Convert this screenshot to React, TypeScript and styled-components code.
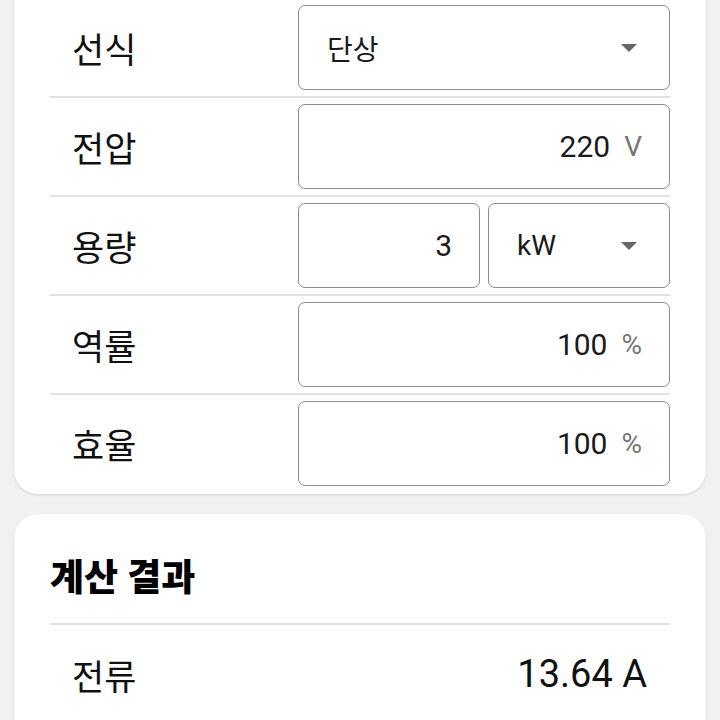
import styled, { createGlobalStyle } from "styled-components";

const GlobalStyle = createGlobalStyle`
  html, body {
    margin: 0;
    padding: 0;
    background-color: #f1f1f1;
    font-family: Roboto, "Noto Sans CJK KR", sans-serif;
    color: #111;
  }
  * {
    box-sizing: border-box;
  }
`;

const Page = styled.div`
  display: flex;
  flex-direction: column;
  gap: 20px;
  padding: 0 14px;
  margin-top: -41px;
`;

const Card = styled.div<{ $top?: number; $bottom?: number }>`
  background-color: #fff;
  border-radius: 24px;
  padding: ${(p) => p.$top ?? 0}px 36px ${(p) => p.$bottom ?? 0}px;
  box-shadow: 0 1px 3px rgba(0, 0, 0, 0.12);
`;

const Row = styled.div<{ $last?: boolean }>`
  display: grid;
  grid-template-columns: 248px 1fr;
  align-items: center;
  padding: 6px 0;
  border-bottom: ${(p) => (p.$last ? "none" : "2px solid #e2e2e2")};
`;

const Label = styled.div<{ $inset?: number }>`
  padding-left: ${(p) => p.$inset ?? 22}px;
  font-size: 35px;
  font-weight: 400;
  color: #111;
`;

const Fields = styled.div`
  display: grid;
  grid-auto-flow: column;
  grid-auto-columns: minmax(0, 1fr);
  gap: 8px;
`;

const Field = styled.div`
  height: 85px;
  border: 1.5px solid #8c8c8c;
  border-radius: 7px;
  display: flex;
  align-items: center;
  justify-content: flex-end;
  padding: 0 27px 0 20px;
`;

const Value = styled.span`
  font-size: 30px;
  color: #1a1a1a;
`;

const Unit = styled.span`
  margin-left: 14px;
  font-size: 28px;
  color: #767676;
`;

const Select = styled.div`
  height: 85px;
  border: 1.5px solid #8c8c8c;
  border-radius: 7px;
  display: flex;
  align-items: center;
  justify-content: space-between;
  padding: 0 32px 0 28px;
`;

const SelectText = styled.span`
  font-size: 28px;
  color: #1a1a1a;
`;

const Arrow = styled.span`
  width: 0;
  height: 0;
  border-left: 8px solid transparent;
  border-right: 8px solid transparent;
  border-top: 8px solid #666;
`;

const Title = styled.h2`
  margin: 0;
  font-size: 37px;
  font-weight: 900;
  line-height: 41px;
  color: #000;
  padding-bottom: 24px;
  border-bottom: 2px solid #e2e2e2;
`;

const ResultRow = styled.div`
  display: flex;
  align-items: center;
  justify-content: space-between;
  height: 98px;
  padding: 0 23px 0 22px;
`;

const ResultValue = styled.span`
  font-size: 38px;
  color: #111;
`;

const NumberField = ({ value, unit }: { value: string; unit?: string }) => (
  <Field>
    <Value>{value}</Value>
    {unit && <Unit>{unit}</Unit>}
  </Field>
);

const Dropdown = ({ text }: { text: string }) => (
  <Select>
    <SelectText>{text}</SelectText>
    <Arrow />
  </Select>
);

const App = () => {
  return (
    <>
      <GlobalStyle />
      <Page>
        <Card $top={40} $bottom={2}>
          <Row>
            <Label>선식</Label>
            <Fields>
              <Dropdown text="단상" />
            </Fields>
          </Row>
          <Row>
            <Label>전압</Label>
            <Fields>
              <NumberField value="220" unit="V" />
            </Fields>
          </Row>
          <Row>
            <Label>용량</Label>
            <Fields>
              <NumberField value="3" />
              <Dropdown text="kW" />
            </Fields>
          </Row>
          <Row>
            <Label>역률</Label>
            <Fields>
              <NumberField value="100" unit="%" />
            </Fields>
          </Row>
          <Row $last>
            <Label>효율</Label>
            <Fields>
              <NumberField value="100" unit="%" />
            </Fields>
          </Row>
        </Card>
        <Card $top={44} $bottom={20}>
          <Title>계산 결과</Title>
          <ResultRow>
            <Label $inset={0}>전류</Label>
            <ResultValue>13.64 A</ResultValue>
          </ResultRow>
        </Card>
      </Page>
    </>
  );
};

export default App;
